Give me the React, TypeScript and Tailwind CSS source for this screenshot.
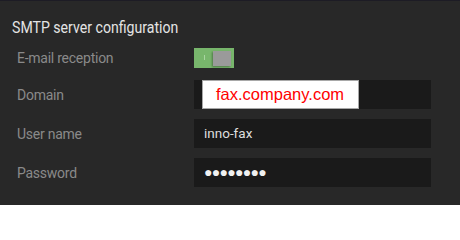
import React from "react";

function Label({ children }: { children: React.ReactNode }) {
  return (
    <div className="w-[182px] shrink-0 pl-[5px] text-[14px] leading-[20px] tracking-[-0.25px] text-[#8a8a8a] font-['Roboto',sans-serif]">
      {children}
    </div>
  );
}

export default function App() {
  return (
    <div className="w-[460px] h-[205px] bg-[#282828] border-t border-[#1d1c25] overflow-hidden">
      <div className="pt-[14px] px-[12px]">
        <div className="origin-left scale-x-[0.83] whitespace-nowrap text-[17px] leading-[24px] text-[#e4e4e4] font-['Roboto',sans-serif]">
          SMTP server configuration
        </div>
        <div className="mt-[6px] flex flex-col gap-[10px]">
          <div className="flex h-[25px] items-center">
            <Label>E-mail reception</Label>
            <div className="relative h-[20px] w-[40px] bg-[#78b66c]">
              <div className="absolute left-[10px] top-[7px] h-[5px] w-[1px] bg-[#a9d4a0]" />
              <div className="absolute right-[3px] top-[3px] h-[15px] w-[18px] bg-[#9a9a9a] shadow-[-1px_1px_2px_rgba(0,0,0,0.35)]" />
            </div>
          </div>
          <div className="flex h-[29px] items-center">
            <Label>Domain</Label>
            <div className="flex h-[29px] w-[237px] items-stretch bg-[#1a1a1a] pl-[8px]">
              <div className="flex w-[157px] items-center border border-[#a8a8a8] bg-white pl-[13px] text-[16.5px] text-[#ff0000] font-['Liberation_Sans',Arial,sans-serif]">
                fax.company.com
              </div>
            </div>
          </div>
          <div className="flex h-[29px] items-center">
            <Label>User name</Label>
            <div className="flex h-[29px] w-[237px] items-center bg-[#1a1a1a] pl-[10px] text-[13.5px] text-[#dedede] font-['Roboto',sans-serif]">
              inno-fax
            </div>
          </div>
          <div className="flex h-[29px] items-center">
            <Label>Password</Label>
            <div className="flex h-[29px] w-[237px] items-center bg-[#1a1a1a] pl-[10px] text-[14px] tracking-[-0.7px] text-[#f0f0f0] font-['Liberation_Sans',sans-serif]">
              ●●●●●●●●
            </div>
          </div>
        </div>
      </div>
    </div>
  );
}
